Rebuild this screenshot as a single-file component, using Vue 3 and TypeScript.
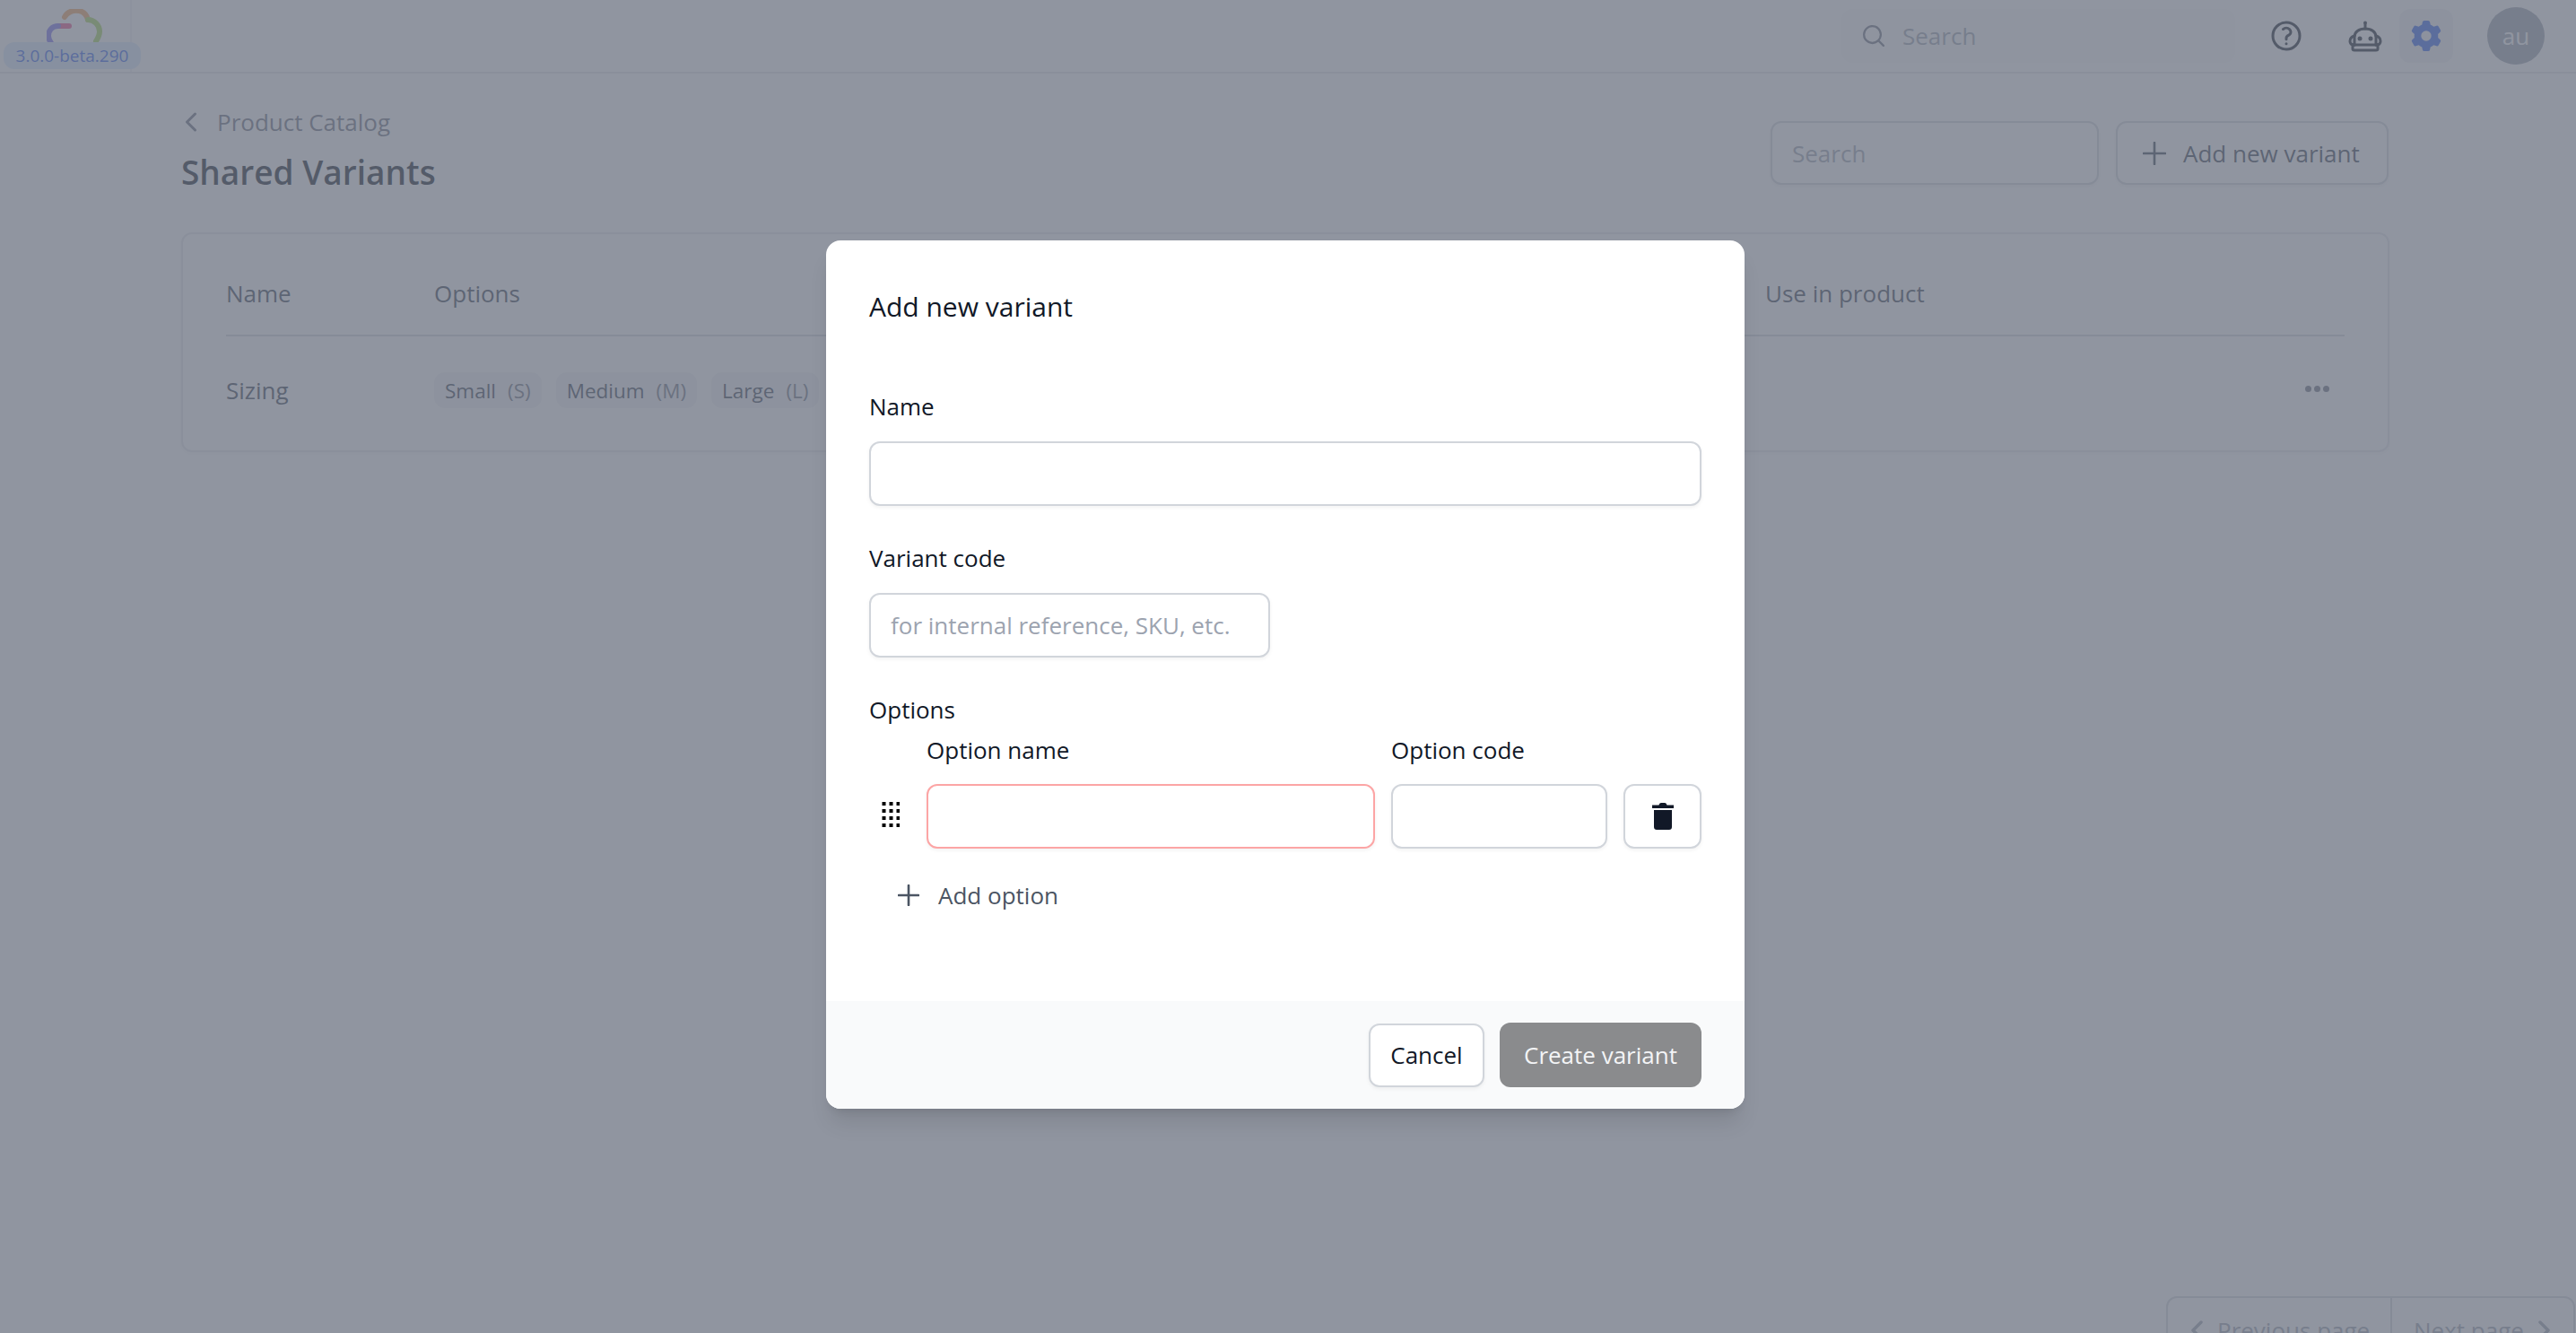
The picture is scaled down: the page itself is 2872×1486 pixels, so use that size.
<script setup lang="ts">
interface Chip { name: string; code: string }
const chips: Chip[] = [
  { name: 'Small', code: '(S)' },
  { name: 'Medium', code: '(M)' },
  { name: 'Large', code: '(L)' },
]
const dragDots: [number, number][] = []
for (let r = 0; r < 4; r++) for (let c = 0; c < 3; c++) dragDots.push([c * 8, r * 8])
</script>

<template>
  <div class="page">
    <header class="topbar">
      <div class="brand">
        <svg class="cloud" width="66" height="40" viewBox="0 0 66 40" fill="none" stroke-width="6" stroke-linecap="round">
          <path d="M20 9C23 3 30 1 36 2C42 3 45 8 46 12" stroke="#f2a45c" />
          <path d="M46 12C53 12 59 18 59 25C59 30 57 33 55 36" stroke="#a5d65a" />
          <path d="M25 19H13" stroke="#ec4f8c" />
          <path d="M13 19C6 19 2 24 2 30C2 33 3 35 5 38" stroke="#7a6ff0" />
        </svg>
        <span class="version">3.0.0-beta.290</span>
      </div>
      <div class="top-search">
        <svg width="24" height="24" viewBox="2 2 16 16" fill="#6b7280"><path fill-rule="evenodd" clip-rule="evenodd" d="M9 3.5a5.5 5.5 0 100 11 5.5 5.5 0 000-11zM2 9a7 7 0 1112.452 4.391l3.328 3.329a.75.75 0 11-1.06 1.06l-3.329-3.328A7 7 0 012 9z" /></svg>
        <input class="top-search-input" placeholder="Search" />
      </div>
      <div class="top-icons">
        <svg class="icon-help" width="40" height="40" viewBox="0 0 24 24" fill="none" stroke="#111827" stroke-width="1.8" stroke-linecap="round" stroke-linejoin="round"><path d="M9.879 7.519c1.171-1.025 3.071-1.025 4.242 0 1.172 1.025 1.172 2.687 0 3.712-.203.179-.43.326-.67.442-.745.361-1.45.999-1.45 1.827v.75M21 12a9 9 0 11-18 0 9 9 0 0118 0zm-9 5.25h.008v.008H12v-.008z" /></svg>
        <svg class="icon-robot" width="40" height="36" viewBox="0 0 40 36" fill="none" stroke="#111827" stroke-width="3" stroke-linecap="round" stroke-linejoin="round">
          <circle cx="20" cy="3.5" r="2" fill="#111827" stroke="none" />
          <path d="M20 5V10" />
          <path d="M8 28V19C8 13.500 13 10 20 10C27 10 32 13.500 32 19V28" />
          <path d="M8 18C4 19 3 21 3 24C3 27 5 28 8 28M32 18C36 19 37 21 37 24C37 27 35 28 32 28" />
          <path d="M6 32.500C6 33.500 7 34 8 34H32C33 34 34 33.500 34 32.500V28H6Z" />
          <circle cx="14" cy="21" r="2.500" fill="#111827" stroke="none" />
          <circle cx="26" cy="21" r="2.500" fill="#111827" stroke="none" />
        </svg>
        <span class="gear-wrap">
          <svg width="38" height="38" viewBox="0 0 20 20" fill="#2f62f0"><path fill-rule="evenodd" clip-rule="evenodd" d="M7.84 1.804A1 1 0 018.82 1h2.36a1 1 0 01.98.804l.331 1.652a6.993 6.993 0 011.929 1.115l1.598-.54a1 1 0 011.186.447l1.18 2.044a1 1 0 01-.205 1.251l-1.267 1.113a7.047 7.047 0 010 2.228l1.267 1.113a1 1 0 01.206 1.25l-1.18 2.045a1 1 0 01-1.187.447l-1.598-.54a6.993 6.993 0 01-1.929 1.115l-.33 1.652a1 1 0 01-.98.804H8.82a1 1 0 01-.98-.804l-.331-1.652a6.993 6.993 0 01-1.929-1.115l-1.598.54a1 1 0 01-1.186-.447l-1.18-2.044a1 1 0 01.205-1.251l1.267-1.114a7.05 7.05 0 010-2.227L1.821 7.773a1 1 0 01-.206-1.25l1.18-2.045a1 1 0 011.187-.447l1.598.54A6.993 6.993 0 017.51 3.456l.33-1.652zM10 13a3 3 0 100-6 3 3 0 000 6z" /></svg>
        </span>
        <span class="avatar">au</span>
      </div>
    </header>

    <main class="main">
      <div class="page-head">
        <div>
          <a class="back">
            <svg width="14" height="22" viewBox="0 0 14 22" fill="none" stroke="#6b7280" stroke-width="3" stroke-linecap="round" stroke-linejoin="round"><path d="M11.500 2L2.500 11L11.500 20" /></svg>
            <span>Product Catalog</span>
          </a>
          <h1 class="title">Shared Variants</h1>
        </div>
        <div class="head-actions">
          <input class="head-search" placeholder="Search" />
          <button class="add-btn">
            <svg width="26" height="26" viewBox="0 0 26 26" fill="none" stroke="#374151" stroke-width="2.600" stroke-linecap="round"><path d="M13 1V25M1 13H25" /></svg>
            <span>Add new variant</span>
          </button>
        </div>
      </div>

      <section class="card">
        <div class="grid grid-head">
          <span>Name</span>
          <span>Options</span>
          <span>Use in product</span>
        </div>
        <div class="grid grid-row">
          <span class="row-name">Sizing</span>
          <div class="chips">
            <span v-for="c in chips" :key="c.name" class="chip">{{ c.name }}<em>{{ c.code }}</em></span>
          </div>
          <span class="dots"><i></i><i></i><i></i></span>
        </div>
      </section>

      <nav class="pager">
        <span class="pager-btn prev">
          <svg width="13" height="22" viewBox="0 0 13 22" fill="none" stroke="#9ca3af" stroke-width="3.500" stroke-linecap="round" stroke-linejoin="round"><path d="M11 2L2 11L11 20" /></svg>
          Previous page
        </span>
        <span class="pager-btn next">
          Next page
          <svg width="13" height="22" viewBox="0 0 13 22" fill="none" stroke="#9ca3af" stroke-width="3.500" stroke-linecap="round" stroke-linejoin="round"><path d="M2 2L11 11L2 20" /></svg>
        </span>
      </nav>
    </main>

    <div class="overlay">
      <div class="modal">
        <div class="modal-body">
          <h2 class="modal-title">Add new variant</h2>

          <label class="label label-name">Name</label>
          <input class="field" />

          <label class="label label-gap">Variant code</label>
          <input class="field code-field" placeholder="for internal reference, SKU, etc." />

          <label class="label label-gap">Options</label>
          <div class="opt-grid opt-labels">
            <span></span>
            <span class="label">Option name</span>
            <span class="label">Option code</span>
            <span></span>
          </div>
          <div class="opt-grid">
            <svg class="drag" width="20" height="28" viewBox="0 0 20 28" fill="#000">
              <rect v-for="(d, i) in dragDots" :key="i" :x="d[0] + 0.500" :y="d[1]" width="4" height="4" />
            </svg>
            <input class="field error" />
            <input class="field" />
            <button class="trash-btn">
              <svg width="24" height="30" viewBox="0 0 24 30" fill="#111827">
                <path d="M0 2.500H7.500C8 .8 9 0 10 0H14C15 0 16 .8 16.500 2.500H24V6H0Z" />
                <path d="M2 8H22V27C22 28.800 20.800 30 19 30H5C3.200 30 2 28.800 2 27Z" />
              </svg>
            </button>
          </div>
          <button class="add-option">
            <svg width="24" height="24" viewBox="0 0 24 24" fill="none" stroke="#4b5563" stroke-width="2.600" stroke-linecap="round"><path d="M12 1V23M1 12H23" /></svg>
            <span>Add option</span>
          </button>
        </div>
        <div class="modal-foot">
          <button class="btn-cancel">Cancel</button>
          <button class="btn-create">Create variant</button>
        </div>
      </div>
    </div>
  </div>
</template>

<style>
html, body { margin: 0; overflow: hidden; background: #fff; }
</style>

<style scoped>
* { box-sizing: border-box; }
.page {
  position: relative;
  width: 2872px;
  height: 1486px;
  overflow: hidden;
  display: flex;
  flex-direction: column;
  background: #fff;
  font-family: "Open Sans", "Noto Sans", sans-serif;
  font-size: 26px;
  color: #111827;
}
input, button { font-family: inherit; font-size: inherit; outline: none; }

.topbar {
  flex: none;
  height: 82px;
  display: flex;
  align-items: center;
  border-bottom: 2px solid #e5e7eb;
}
.brand {
  position: relative;
  flex: none;
  width: 147px;
  height: 80px;
  border-right: 2px solid #f3f4f6;
}
.cloud { position: absolute; left: 52px; top: 10px; }
.version {
  position: absolute;
  left: 4px;
  top: 47px;
  width: 153px;
  height: 30px;
  border-radius: 12px;
  background: #dbeafe;
  color: #2f62f0;
  font-size: 19px;
  font-weight: 500;
  line-height: 30px;
  text-align: center;
  white-space: nowrap;
}
.top-search {
  margin-left: auto;
  width: 439px;
  height: 60px;
  display: flex;
  align-items: center;
  gap: 20px;
  padding-left: 24px;
  border-radius: 12px;
  background: #fafbfc;
}
.top-search-input {
  flex: 1;
  min-width: 0;
  border: 0;
  background: transparent;
  padding: 0;
  color: #111827;
}
.top-search-input::placeholder, .head-search::placeholder { color: #9ca3af; opacity: 1; }
.top-icons {
  display: flex;
  align-items: center;
  margin-left: 37px;
  padding-right: 35px;
}
.icon-help { display: block; }
.icon-robot { display: block; margin-left: 48px; }
.gear-wrap {
  display: flex;
  align-items: center;
  justify-content: center;
  width: 60px;
  height: 60px;
  margin-left: 18px;
  border-radius: 12px;
  background: #f3f4f6;
}
.avatar {
  width: 64px;
  height: 64px;
  margin-left: 38px;
  border-radius: 50%;
  background: #9ca3af;
  color: #fff;
  font-weight: 500;
  display: flex;
  align-items: center;
  justify-content: center;
}

.main {
  flex: 1;
  min-height: 0;
  display: flex;
  flex-direction: column;
  padding: 34px 208px 0 202px;
}
.page-head {
  flex: none;
  display: flex;
  justify-content: space-between;
  align-items: flex-start;
}
.back {
  display: flex;
  align-items: center;
  gap: 22px;
  height: 40px;
  padding-left: 4px;
  color: #6b7280;
}
.title {
  margin: 8px 0 0;
  font-size: 37px;
  line-height: 56px;
  font-weight: 600;
  color: #111827;
}
.head-actions {
  display: flex;
  gap: 19px;
  margin-top: 19px;
  padding-right: 1px;
}
.head-search {
  width: 366px;
  height: 71px;
  padding: 0 22px;
  border: 2px solid #d1d5db;
  border-radius: 12px;
  background: #fff;
  box-shadow: 0 2px 4px rgba(0, 0, 0, .05);
}
.add-btn {
  height: 71px;
  width: 304px;
  display: flex;
  align-items: center;
  gap: 19px;
  padding: 0 0 0 28px;
  border: 2px solid #d1d5db;
  border-radius: 12px;
  background: #fff;
  color: #374151;
  font-weight: 500;
  box-shadow: 0 2px 4px rgba(0, 0, 0, .05);
}

.card {
  flex: none;
  height: 245px;
  margin-top: 39px;
  padding: 0 48px;
  border: 2px solid #e5e7eb;
  border-radius: 12px;
  background: #fff;
  box-shadow: 0 2px 4px rgba(0, 0, 0, .04);
}
.grid {
  display: grid;
  grid-template-columns: 232px 1484px 1fr;
  align-items: center;
}
.grid-head {
  height: 114px;
  padding-top: 20px;
  border-bottom: 2px solid #d1d5db;
  color: #374151;
  font-weight: 500;
}
.grid-row { height: 116px; color: #374151; padding-top: 4px; }
.row-name { font-weight: 500; }
.chips { display: flex; gap: 16px; white-space: nowrap; }
.chip {
  display: inline-flex;
  align-items: center;
  height: 40px;
  padding: 0 12px;
  border-radius: 12px;
  background: #f3f4f6;
  font-size: 22.500px;
  color: #374151;
}
.chip em { font-style: normal; color: #6b7280; margin-left: 13px; }
.dots {
  justify-self: end;
  display: flex;
  gap: 3px;
  margin-right: 17px;
  margin-top: -4px;
}
.dots i { width: 7px; height: 7px; border-radius: 50%; background: #6b7280; }

.pager {
  position: absolute;
  left: 2415px;
  top: 1445px;
  width: 456px;
  height: 82px;
  display: flex;
  border: 2px solid #d1d5db;
  border-radius: 12px;
  color: #9ca3af;
}
.pager-btn { display: flex; align-items: center; gap: 16px; height: 72px; }
.prev { width: 250px; padding-left: 26px; border-right: 2px solid #d1d5db; height: 82px; padding-bottom: 10px; }
.next { padding-left: 24px; }

.overlay {
  position: absolute;
  inset: 0;
  display: flex;
  justify-content: center;
  align-items: flex-start;
  padding: 268px 6px 0 0;
  background: rgba(107, 114, 128, .75);
}
.modal {
  width: 1024px;
  height: 968px;
  display: flex;
  flex-direction: column;
  border-radius: 16px;
  overflow: hidden;
  background: #fff;
  box-shadow: 0 20px 25px -5px rgba(0, 0, 0, .1), 0 8px 10px -6px rgba(0, 0, 0, .1);
}
.modal-body { flex: 1; padding: 52px 48px 0; }
.modal-title {
  margin: 0 0 69px;
  font-size: 30px;
  line-height: 44px;
  font-weight: 500;
  color: #111827;
}
.label {
  display: block;
  font-size: 26px;
  line-height: 40px;
  font-weight: 500;
  color: #111827;
}
.label-name { margin-bottom: 19px; }
.label-gap { margin-top: 38px; margin-bottom: 19px; }
.field {
  display: block;
  width: 100%;
  height: 72px;
  padding: 0 22px;
  border: 2px solid #d1d5db;
  border-radius: 12px;
  background: #fff;
  box-shadow: 0 2px 4px rgba(0, 0, 0, .05);
  color: #111827;
}
.field::placeholder { color: #9ca3af; opacity: 1; }
.code-field { width: 447px; }
.field.error { border-color: #fca5a5; }
.opt-grid {
  display: grid;
  grid-template-columns: 64px 500px 242px 87px;
  column-gap: 17px;
  align-items: center;
}
.opt-grid { column-gap: 0; grid-template-columns: 64px 518px 259px 87px; }
.opt-grid > .field { width: calc(100% - 18px); }
.opt-labels { margin-top: -14px; margin-bottom: 18px; }
.drag { display: block; margin-left: 14px; margin-top: -4px; }
.trash-btn {
  width: 87px;
  height: 72px;
  display: flex;
  align-items: center;
  justify-content: center;
  border: 2px solid #d1d5db;
  border-radius: 12px;
  background: #fff;
  box-shadow: 0 2px 4px rgba(0, 0, 0, .05);
  padding: 0;
}
.add-option {
  display: flex;
  align-items: center;
  gap: 21px;
  height: 40px;
  margin: 32px 0 0 32px;
  padding: 0;
  border: 0;
  background: transparent;
  color: #4b5563;
  font-weight: 500;
}
.modal-foot {
  flex: none;
  height: 120px;
  display: flex;
  justify-content: flex-end;
  align-items: center;
  gap: 17px;
  padding: 0 48px;
  background: #f9fafb;
}
.btn-cancel {
  width: 129px;
  height: 71px;
  border: 2px solid #d1d5db;
  border-radius: 12px;
  background: #fff;
  color: #111827;
  font-weight: 500;
  box-shadow: 0 2px 4px rgba(0, 0, 0, .05);
}
.btn-create {
  width: 225px;
  height: 72px;
  border: 0;
  border-radius: 12px;
  background: #8a8b8d;
  color: #f3f4f6;
  font-weight: 500;
}
</style>
